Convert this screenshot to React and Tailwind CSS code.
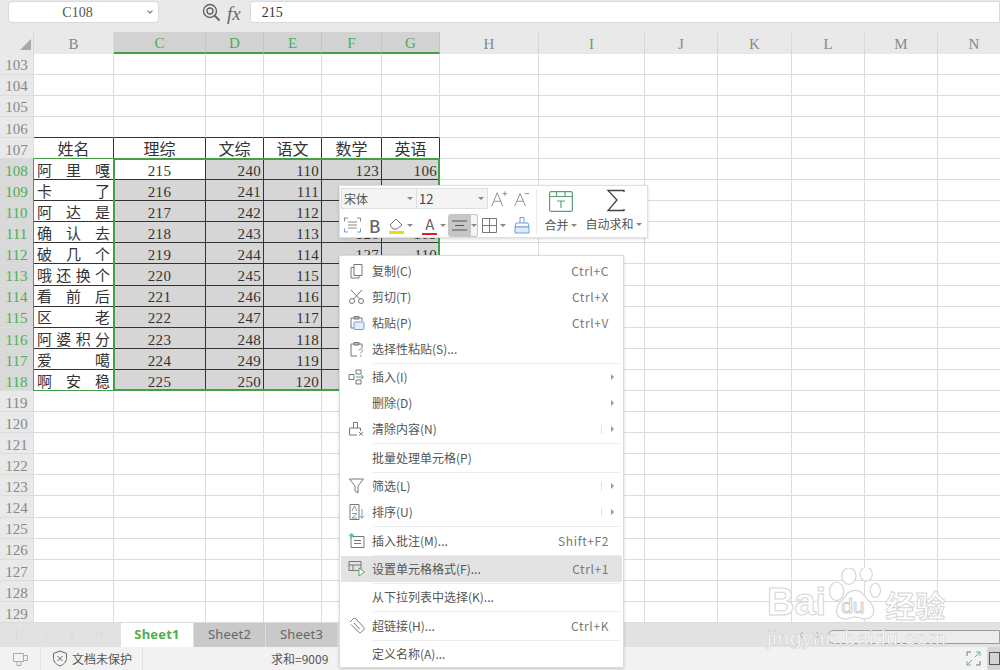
import React from "react";
import { ChevronDown, ChevronLeft, ChevronRight, ChevronFirst, ChevronLast } from "lucide-react";

const columns = ["B", "C", "D", "E", "F", "G", "H", "I", "J", "K", "L", "M", "N"];
const rowNumbers = Array.from({ length: 27 }, (_, i) => 103 + i);
const titles = ["姓名", "理综", "文综", "语文", "数学", "英语"];
const names = [
  ["阿", "里", "嘎"],
  ["卡", "了"],
  ["阿", "达", "是"],
  ["确", "认", "去"],
  ["破", "几", "个"],
  ["哦", "还", "换", "个"],
  ["看", "前", "后"],
  ["区", "老"],
  ["阿", "婆", "积", "分"],
  ["爱", "噶"],
  ["啊", "安", "稳"],
];

const serif = "font-['Liberation_Serif','Noto_Sans_CJK_SC',serif]";

function GridCell({ row, colIndex }) {
  const inTable = colIndex <= 5;
  const body = row >= 108 && row <= 118;
  const offset = row - 108;
  const lineColor = inTable && row >= 107 && row <= 118 ? "border-r-[#333]" : "border-r-[#dcdcdc]";
  const bottomColor = inTable && row >= 106 && row <= 118 ? "border-b-[#333]" : "border-b-[#dcdcdc]";
  let bg = "bg-white";
  if (body && colIndex >= 1 && colIndex <= 5 && !(row === 108 && colIndex === 1)) bg = "bg-[#d6d6d6]";

  // F and G sit under the toolbar and the menu from row 109 on, only 111 and 112 peek out
  const covered = colIndex >= 4 && offset >= 1 && ![111, 112].includes(row);

  let content = null;
  if (row === 107 && inTable) {
    content = <span className="w-full text-center text-[16px] text-[#333]">{titles[colIndex]}</span>;
  } else if (body && colIndex === 0) {
    content = (
      <span className="flex w-full justify-between px-[3px] text-[15px] text-[#333]">
        {names[offset].map((n, i) => (
          <span key={i}>{n}</span>
        ))}
      </span>
    );
  } else if (body && colIndex === 1) {
    content = <span className="w-full text-center text-[15px] tracking-[0.3px]">{215 + offset}</span>;
  } else if (body && inTable && !covered) {
    const base = [0, 0, 240, 110, 123, 106][colIndex];
    content = <span className="w-full pr-[2px] text-right text-[15px] tracking-[0.3px]">{base + offset}</span>;
  }

  return (
    <div className={`flex items-center overflow-hidden border-r border-b pt-[4px] text-[#333] ${lineColor} ${bottomColor} ${bg} ${serif}`}>
      {content}
    </div>
  );
}

function FormulaBar() {
  return (
    <div className="flex h-8 shrink-0 items-start bg-[#e9e9e9] pt-[1px]">
      <div className="ml-2 flex h-[22px] w-[151px] items-center rounded-[4px] border border-[#dadada] bg-white text-[14px] text-[#555] font-['Liberation_Serif',serif]">
        <span className="flex-1 text-center">C108</span>
        <ChevronDown size={8} className="mr-[4px] text-[#888]" strokeWidth={4} />
      </div>
      <svg className="ml-[42px] mt-[1px]" width="20" height="20" viewBox="0 0 20 20" fill="none" stroke="#666" strokeWidth="1.4">
        <circle cx="9" cy="9" r="6.5" />
        <circle cx="9" cy="9" r="3" />
        <path d="M13.5 13.5l5 5" strokeWidth="2" />
      </svg>
      <span className="ml-[6px] -mt-[1px] text-[19px] italic text-[#666] font-['Liberation_Serif',serif]">fx</span>
      <div className="ml-[9px] flex h-[22px] flex-1 items-center rounded-l-[4px] border border-[#dadada] bg-white pl-[11px] text-[14px] text-[#333] font-['Liberation_Serif',serif]">
        215
      </div>
    </div>
  );
}

function Sheet() {
  return (
    <div className="relative grid h-[591px] shrink-0 grid-cols-[34px_80px_92px_58px_58px_60px_58px_99px_106px_73px_74px_73px_73px_73px] grid-rows-[21.5px_repeat(27,21.1px)] overflow-hidden bg-white">
      <div className="flex items-end justify-end border-r border-[#d8d8d8] bg-[#e9e9e9] p-[2px] pb-[4px]">
        <div className="h-0 w-0 border-b-[11px] border-l-[11px] border-b-[#a8a8a8] border-l-transparent" />
      </div>
      {columns.map((c, i) => {
        const on = i >= 1 && i <= 5;
        return (
          <div
            key={c}
            className={`flex items-center justify-center pt-[3px] text-[15px] ${serif} ${
              on
                ? "border-r border-b-2 border-r-[#c4c4c4] border-b-[#43a047] bg-[#d2d2d2] text-[#4caf50]"
                : "border-r border-[#d8d8d8] bg-[#e9e9e9] text-[#888]"
            }`}
          >
            {c}
          </div>
        );
      })}
      {rowNumbers.map((row) => (
        <React.Fragment key={row}>
          <div
            className={`flex items-center justify-center border-r border-b border-[#dcdcdc] pt-[4px] text-[15px] ${serif} ${
              row >= 108 && row <= 118 ? "bg-[#d9d9d9] text-[#4caf50]" : "bg-[#e9e9e9] text-[#888]"
            }`}
          >
            {row}
          </div>
          {columns.map((c, i) => (
            <GridCell key={c} row={row} colIndex={i} />
          ))}
        </React.Fragment>
      ))}
      <div className="pointer-events-none absolute inset-0 col-start-2 col-end-3 row-start-7 row-end-18 -mt-[1px] -ml-[1px] border border-[#43a047]" />
      <div className="pointer-events-none absolute inset-0 col-start-3 col-end-8 row-start-7 row-end-18 -mt-[1px] -ml-[1px] border-2 border-[#43a047]" />
    </div>
  );
}

function TabBar() {
  return (
    <div className="flex h-6 shrink-0 bg-[#e2e2e2]">
      <div className="flex w-[121px] items-center gap-[10px] pl-[12px] text-[#cfcfcf]">
        <ChevronFirst size={16} strokeWidth={1} />
        <ChevronLeft size={16} strokeWidth={1} />
        <ChevronRight size={16} strokeWidth={1} />
        <ChevronLast size={16} strokeWidth={1} />
      </div>
      <div className="flex w-[72px] items-center justify-center bg-white text-[13px] font-bold tracking-[0.2px] text-[#4caf50] font-['Noto_Sans',sans-serif]">
        Sheet1
      </div>
      {["Sheet2", "Sheet3"].map((s) => (
        <div key={s} className="flex w-[72px] items-center justify-center border-l border-[#dcdcdc] bg-[#c9c9c9] text-[13px] tracking-[0.2px] text-[#666] font-['Noto_Sans',sans-serif]">
          {s}
        </div>
      ))}
      <div className="ml-auto flex items-center gap-[7px] pr-[4px] text-[#999]">
        <ChevronLeft size={10} />
        <ChevronRight size={10} />
      </div>
      <div className="mt-[7px] h-[14px] w-[173px] rounded-l-full border border-[#9a9a9a] bg-[#ececec]" />
    </div>
  );
}

function StatusBar() {
  return (
    <div className="flex h-[23px] shrink-0 items-center bg-[#f2f2f2] text-[12px] text-[#555] font-['Noto_Sans_CJK_SC',sans-serif]">
      <div className="flex h-full w-[41px] items-center justify-center border-r border-[#e2e2e2]">
        <svg width="17" height="16" viewBox="0 0 17 16" fill="none" stroke="#aaa">
          <path d="M1.5 2.5h10v8h-10zM11.5 4.5h4v5h-4M5 10.5v4h4v-4" />
        </svg>
      </div>
      <div className="flex h-full w-[102px] items-center border-r border-[#e2e2e2] pl-[11px]">
        <svg width="16" height="17" viewBox="0 0 16 17" fill="none" stroke="#666">
          <path d="M8 1l6.5 2.5v5c0 3.500-3 6-6.500 7.500-3.500-1.500-6.500-4-6.500-7.500v-5z" />
          <path d="M5.500 6l5 5M10.500 6l-5 5" />
        </svg>
        <span className="ml-[4px]">文档未保护</span>
      </div>
      <span className="ml-[128px]">求和=9009</span>
      <div className="ml-auto flex h-full items-center">
        <svg width="15" height="15" viewBox="0 0 15 15" fill="none" stroke="#777">
          <path d="M1 5V1h4" />
          <path d="M14 10v4h-4" />
          <path d="M10 1h4v4M9 6l5-5" stroke="#6cb58a" />
          <path d="M1 10v4h4M6 9l-5 5" stroke="#6cb58a" />
        </svg>
        <div className="ml-[6px] flex h-full w-[13px] items-center justify-start rounded-l-[3px] bg-[#d4d4d4] pl-[2px]">
          <div className="h-[13px] w-[12px] border border-[#555]" />
        </div>
      </div>
    </div>
  );
}

const icon = "#777";
const menuIcons = {
  copy: (
    <>
      <path d="M6 2.500h8v11H6z" stroke={icon} fill="none" />
      <path d="M3 5.500h3M3 5.500v10.500h8v-2.500" stroke={icon} fill="none" />
    </>
  ),
  cut: (
    <>
      <circle cx="4" cy="13" r="2.500" stroke={icon} fill="none" />
      <circle cx="13" cy="13" r="2.500" stroke={icon} fill="none" />
      <path d="M5.500 11L14 2M11.500 11L3 2" stroke={icon} fill="none" />
    </>
  ),
  paste: (
    <>
      <path d="M3 4h11v3M3 4v10h3" stroke={icon} fill="none" />
      <path d="M6 2.500h5V5H6z" stroke={icon} fill="none" />
      <rect x="6" y="8" width="10" height="7.500" rx="1" stroke="#6f9fd8" fill="#e4eefa" />
    </>
  ),
  special: (
    <>
      <path d="M3 4h11v4M3 4v12h6" stroke={icon} fill="none" />
      <path d="M6 2.500h5V5H6z" stroke={icon} fill="none" />
      <path d="M11 10.500c0-2 3.500-2 3.500 0 0 1.500-1.700 1.500-1.700 3M12.800 15v1.500" stroke="#5aa469" fill="none" />
    </>
  ),
  insert: (
    <>
      <path d="M1 6.500h5v5H1zM8 2h5v4H8zM8 12h5v4H8z" stroke={icon} fill="none" />
      <path d="M8 9h7M13 7l2.500 2-2.500 2" stroke="#5aa469" fill="none" />
    </>
  ),
  clear: (
    <>
      <path d="M5.500 8V2.500h4V8M1.500 15V8h11v3M1.500 15H9" stroke={icon} fill="none" />
      <path d="M11 12l4 3.500M15 12l-4 3.500" stroke={icon} fill="none" />
    </>
  ),
  filter: <path d="M1.500 2h14L10 9v7l-3-2V9z" stroke={icon} fill="none" />,
  sort: (
    <>
      <path d="M2 1.500h9v15H2z" stroke={icon} fill="none" />
      <path d="M4 8l2.500-5L9 8M4 10.500h5L4 15h5" stroke={icon} fill="none" strokeWidth=".8" />
      <path d="M14 6v9M12 13l2 2.500 2-2.500" stroke="#6f9fd8" fill="none" />
    </>
  ),
  comment: (
    <>
      <path d="M3 4.500h13v11H3zM6 8.500h7M6 11.500h7" stroke={icon} fill="none" />
      <path d="M1 3.500h5M3.500 1v5M1.500 1.500l4 4M5.500 1.500l-4 4" stroke="#6cc08b" fill="none" />
    </>
  ),
  format: (
    <>
      <path d="M1 1.500h12v9H1zM1 5h12M5 5v5.500" stroke={icon} fill="none" />
      <path d="M11 8l5.500 4-5.500 4z" stroke="#5aa469" fill="#fff" />
    </>
  ),
  link: (
    <>
      <path d="M2 5l3-3c1-1 2-1 3 0l7.500 8c1 1 1 2 0 3l-2 2c-1 1-2 1-3 0L3 7.500" stroke={icon} fill="none" />
      <path d="M6 6l5.500 6" stroke={icon} fill="none" />
    </>
  ),
};

// y gaps between items come from the thin separators
const menu = [
  { label: "复制(C)", key: "Ctrl+C", icon: "copy" },
  { label: "剪切(T)", key: "Ctrl+X", icon: "cut" },
  { label: "粘贴(P)", key: "Ctrl+V", icon: "paste" },
  { label: "选择性粘贴(S)...", icon: "special" },
  { sep: "h-[2px]" },
  { label: "插入(I)", icon: "insert", sub: true },
  { label: "删除(D)", sub: true },
  { label: "清除内容(N)", icon: "clear", sub: true, bar: true },
  { sep: "h-[3px]" },
  { label: "批量处理单元格(P)" },
  { sep: "h-[2px]" },
  { label: "筛选(L)", icon: "filter", sub: true, bar: true },
  { label: "排序(U)", icon: "sort", sub: true, bar: true },
  { sep: "h-[3px]" },
  { label: "插入批注(M)...", key: "Shift+F2", icon: "comment" },
  { sep: "h-[2px]" },
  { label: "设置单元格格式(F)...", key: "Ctrl+1", icon: "format", active: true },
  { sep: "h-[2px]" },
  { label: "从下拉列表中选择(K)..." },
  { sep: "h-[3px]" },
  { label: "超链接(H)...", key: "Ctrl+K", icon: "link" },
  { sep: "h-[2px]" },
  { label: "定义名称(A)..." },
];

function ContextMenu() {
  return (
    <div className="absolute left-[339px] top-[255px] z-10 w-[285px] border border-[#dcdcdc] bg-white pt-[2px] text-[12px] text-[#555] shadow-[0_1px_3px_rgba(0,0,0,0.18)] font-['Noto_Sans_CJK_SC',sans-serif]">
      {menu.map((m, i) =>
        m.sep ? (
          <div key={i} className={`ml-[33px] mr-[3px] flex items-center ${m.sep}`}>
            <div className="h-px w-full bg-[#ececec]" />
          </div>
        ) : (
          <div key={i} className={`flex h-[26px] items-center ${m.active ? "mx-[1px] bg-[#e3e3e3]" : "mx-[1px]"}`}>
            <div className="flex w-[31px] justify-center">
              {m.icon && (
                <svg width="18" height="18" viewBox="0 0 18 18">
                  {menuIcons[m.icon]}
                </svg>
              )}
            </div>
            <span className="flex-1 truncate">{m.label}</span>
            {m.key && <span className="mr-[13px] tracking-[0.6px] text-[#777]">{m.key}</span>}
            {m.bar && <div className="mr-[9px] h-[9px] w-px bg-[#e2e2e2]" />}
            {m.sub && <div className="mr-[8px] h-0 w-0 border-y-[3px] border-l-[3px] border-y-transparent border-l-[#999]" />}
          </div>
        )
      )}
    </div>
  );
}

function Caret({ className = "" }) {
  return <div className={`h-0 w-0 border-x-[3px] border-t-[3px] border-x-transparent border-t-[#888] ${className}`} />;
}

function MiniToolbar() {
  return (
    <div className="absolute left-[339px] top-[185px] z-10 flex h-[53px] w-[309px] border border-[#e0e0e0] bg-white text-[12px] text-[#555] shadow-[0_1px_3px_rgba(0,0,0,0.15)] font-['Noto_Sans_CJK_SC',sans-serif]">
      <div className="w-[196px] pl-[1px] pt-[2px]">
        <div className="flex items-center">
          <div className="flex h-[21px] w-[147px] items-center border border-[#dedede] bg-[#f4f4f4]">
            <span className="w-[65px] pl-[2px]">宋体</span>
            <Caret className="mr-[3px]" />
            <div className="h-full w-px bg-[#dedede]" />
            <span className="flex-1 pl-[2px] text-[13px] text-[#444]">12</span>
            <Caret className="mr-[3px]" />
          </div>
          <svg className="ml-[2px]" width="18" height="20" viewBox="0 0 20 20" fill="none" stroke="#888">
            <path d="M2 18L8 3l6 15M4.500 12.500h7M14 4h5M16.500 1.500v5" />
          </svg>
          <svg className="ml-[4px]" width="18" height="20" viewBox="0 0 20 20" fill="none" stroke="#888">
            <path d="M3 18L9 4l6 14M5.500 12.500h7M14 4h5" />
          </svg>
        </div>
        <div className="mt-[3px] flex h-[26px] items-center">
          <svg className="ml-[2px]" width="19" height="18" viewBox="0 0 19 18" fill="none" stroke="#888">
            <path d="M5 2H1.500v3.500M14 2h3.500v3.500" />
            <path d="M5 16H1.500v-3.500M14 16h3.500v-3.500" stroke="#6f9fd8" />
            <path d="M5 6h9M5 9h9M5 12h9" />
          </svg>
          <span className="ml-[7px] text-[17px] font-medium leading-none text-[#666]">B</span>
          <svg className="ml-[8px]" width="18" height="19" viewBox="0 0 18 19" fill="none">
            <path d="M2 9l6-6 6 6-5 4H5z" stroke="#777" />
            <rect x="1" y="15" width="15" height="3" fill="#e8e000" />
          </svg>
          <Caret className="ml-[1px]" />
          <div className="relative ml-[9px] flex h-[19px] w-[15px] justify-center text-[15px] leading-[16px] text-[#666]">
            A
            <div className="absolute bottom-0 h-[2px] w-full bg-[#e02020]" />
          </div>
          <Caret className="ml-[3px]" />
          <div className="ml-[2px] flex h-[23px] w-[30px] items-center rounded-[3px] bg-[#c6c6c6]">
            <svg className="ml-[3px]" width="17" height="13" viewBox="0 0 17 13" stroke="#555">
              <path d="M1 2h15M4 6.500h9M1 11h15" />
            </svg>
            <div className="ml-auto flex h-full w-[8px] items-center justify-center rounded-r-[3px] border border-[#c6c6c6] bg-[#f6f6f6]">
              <Caret />
            </div>
          </div>
          <svg className="ml-[4px]" width="15" height="15" viewBox="0 0 15 15" fill="none" stroke="#777">
            <path d="M.5.500h14v14H.5zM7.500.500v14M.5 7.500h14" />
          </svg>
          <Caret className="ml-[3px]" />
          <svg className="ml-[8px]" width="16" height="18" viewBox="0 0 16 18" fill="none" stroke="#6f9fd8">
            <path d="M6 7V1.500h4V7M1 11l1-4h12l1 4z" />
            <path d="M1 11h14v6H1z" fill="#dfeafa" />
          </svg>
        </div>
      </div>
      <div className="my-[3px] w-px bg-[#ececec]" />
      <div className="flex w-[47px] flex-col items-center pt-[5px]">
        <svg width="24" height="21" viewBox="0 0 24 21" fill="none" stroke="#5c9f76" strokeWidth="1.200">
          <rect x=".6" y=".6" width="22.800" height="19.800" rx="1.500" />
          <path d="M.6 5.500h22.800M7.500.6v4.900M16 .6v4.900" />
          <path d="M8 10h8M12 10v7" />
        </svg>
        <div className="mt-[4px] flex items-center gap-[2px] leading-[18px]">
          合并<Caret />
        </div>
      </div>
      <div className="flex flex-1 flex-col items-center pt-[3px]">
        <svg width="20" height="23" viewBox="0 0 20 23" fill="none" stroke="#444" strokeWidth="1.300">
          <path d="M18 3V1.500H2L11 11 2 21.500h16V20" />
        </svg>
        <div className="mt-[3px] flex items-center gap-[2px] pr-[4px] leading-[18px]">
          自动求和<Caret />
        </div>
      </div>
    </div>
  );
}

function Watermark() {
  return (
    <div className="pointer-events-none absolute left-[767px] top-[568px] z-20 flex flex-col text-white font-['Liberation_Sans',sans-serif]">
      <div className="flex h-[59px] items-end">
        <span className="pb-[3px] text-[38px] font-bold leading-[44px] [-webkit-text-stroke:1px_#d6d6d6]">Bai</span>
        <div className="relative ml-[2px] h-[59px] w-[54px]">
          <svg width="54" height="59" viewBox="0 0 52 58" fill="#fff" stroke="#d6d6d6" strokeWidth="1.200">
            <ellipse cx="8" cy="23" rx="7" ry="9" />
            <ellipse cx="20" cy="8" rx="7" ry="8" />
            <ellipse cx="37" cy="6" rx="6" ry="7" />
            <ellipse cx="46" cy="22" rx="5" ry="7" />
            <path d="M26 22c8 0 9 7 15 12 6 6 4 17-6 16-4 0-6-2-9-2s-6 3-11 2C6 49 6 39 12 33c5-4 6-11 14-11z" />
          </svg>
          <span className="absolute bottom-[11px] left-[13px] text-[21px] leading-none text-white [-webkit-text-stroke:1px_#d0d0d0]">du</span>
        </div>
        <span className="mb-[8px] ml-[3px] text-[30px] font-bold leading-none [-webkit-text-stroke:1px_#d6d6d6] font-['Noto_Sans_CJK_SC',sans-serif]">经验</span>
      </div>
      <span className="text-[21px] leading-[22px] tracking-[0.6px] [-webkit-text-stroke:0.5px_#c8c8c8]">jingyan.baidu.com</span>
    </div>
  );
}

export default function App() {
  return (
    <div className="relative flex h-[670px] w-[1000px] flex-col overflow-hidden bg-white">
      <FormulaBar />
      <Sheet />
      <TabBar />
      <StatusBar />
      <MiniToolbar />
      <ContextMenu />
      <Watermark />
    </div>
  );
}
